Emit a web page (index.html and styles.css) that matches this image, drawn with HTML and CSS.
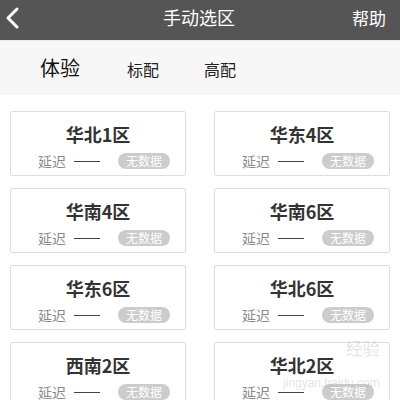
FILE: index.html
```html
<!DOCTYPE html>
<html lang="zh">
<head>
    <meta charset="UTF-8">
    <meta name="viewport" content="width=device-width, initial-scale=1.0">
    <title>手动选区</title>
    <link rel="stylesheet" href="styles.css">
</head>
<body>
    <div class="topbar">
        <svg class="back" width="16" height="24" viewBox="0 0 16 24">
            <path d="M13 3 L4 12 L13 21" fill="none" stroke="#fff" stroke-width="3" stroke-linecap="round" stroke-linejoin="round"/>
        </svg>
        <div class="title">手动选区</div>
        <div class="help">帮助</div>
    </div>
    <div class="tabs">
        <span class="tab active">体验</span>
        <span class="tab">标配</span>
        <span class="tab">高配</span>
    </div>
    <div class="list">
        <div class="card">
            <div class="name">华北1区</div>
            <div class="info"><span class="label">延迟</span><span class="dash"></span><span class="badge">无数据</span></div>
        </div>
        <div class="card">
            <div class="name">华东4区</div>
            <div class="info"><span class="label">延迟</span><span class="dash"></span><span class="badge">无数据</span></div>
        </div>
        <div class="card">
            <div class="name">华南4区</div>
            <div class="info"><span class="label">延迟</span><span class="dash"></span><span class="badge">无数据</span></div>
        </div>
        <div class="card">
            <div class="name">华南6区</div>
            <div class="info"><span class="label">延迟</span><span class="dash"></span><span class="badge">无数据</span></div>
        </div>
        <div class="card">
            <div class="name">华东6区</div>
            <div class="info"><span class="label">延迟</span><span class="dash"></span><span class="badge">无数据</span></div>
        </div>
        <div class="card">
            <div class="name">华北6区</div>
            <div class="info"><span class="label">延迟</span><span class="dash"></span><span class="badge">无数据</span></div>
        </div>
        <div class="card">
            <div class="name">西南2区</div>
            <div class="info"><span class="label">延迟</span><span class="dash"></span><span class="badge">无数据</span></div>
        </div>
        <div class="card">
            <div class="name">华北2区</div>
            <div class="info"><span class="label">延迟</span><span class="dash"></span><span class="badge">无数据</span></div>
        </div>
    </div>
    <div class="mark">
        <div class="mark-top">经验</div>
        <div class="mark-url">jingyan.baidu.com</div>
    </div>
</body>
</html>
```

FILE: styles.css
```css
body {
    margin: 0;
    background-color: #fff;
    font-family: "Noto Sans CJK SC", "Noto Sans", sans-serif;
    overflow: hidden;
}
.topbar {
    height: 40px;
    background-color: #555;
    color: #fff;
    display: flex;
    align-items: center;
    justify-content: space-between;
    padding: 0 14px 0 4px;
    border-bottom: 1px solid #ececec;
}
.back {
    display: block;
    margin-top: -4px;
}
.title {
    font-size: 18px;
    margin-top: -6px;
    padding-left: 26px;
}
.help {
    font-size: 17px;
    margin-top: -6px;
}
.tabs {
    height: 54px;
    background-color: #f7f7f7;
    display: flex;
    align-items: center;
    padding-left: 40px;
    gap: 45px;
}
.tab {
    font-size: 16px;
    color: #222;
    margin-top: 2px;
}
.tab.active {
    font-size: 20px;
    color: #111;
    margin-top: -2px;
    margin-right: 2px;
}
.list {
    display: grid;
    grid-template-columns: 176px 176px;
    column-gap: 28px;
    row-gap: 12px;
    padding: 16px 10px 0;
}
.card {
    height: 63px;
    border: 1px solid #ddd;
    border-radius: 2px;
    display: flex;
    flex-direction: column;
    align-items: center;
}
.name {
    font-size: 18px;
    font-weight: bold;
    color: #333;
    margin-top: 9px;
    line-height: 26px;
}
.info {
    display: flex;
    align-items: center;
    width: 100%;
    padding-left: 27px;
    box-sizing: border-box;
    margin-top: 4px;
}
.label {
    font-size: 14px;
    color: #888;
    line-height: 20px;
}
.dash {
    width: 26px;
    height: 1px;
    background-color: #444;
    margin: 0 18px 0 8px;
}
.badge {
    font-size: 12px;
    color: #fff;
    background-color: #ccc;
    border-radius: 8px;
    padding: 0 8px;
    line-height: 16px;
}
.mark {
    position: absolute;
    left: 283px;
    top: 336px;
    color: rgba(160, 160, 160, 0.3);
    text-align: right;
}
.mark-top {
    font-size: 17px;
    padding-left: 56px;
    line-height: 24px;
}
.mark-url {
    font-family: "Liberation Sans", sans-serif;
    font-size: 12px;
    margin-top: 16px;
}
```
